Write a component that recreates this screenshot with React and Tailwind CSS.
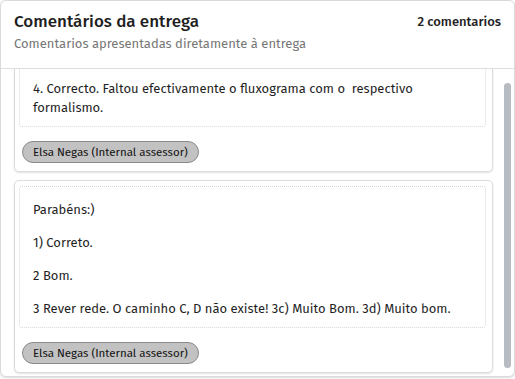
import React, { useRef, useEffect } from 'react';

const comments = [
  {
    id: 1,
    paragraphs: ['4. Correcto. Faltou efectivamente o fluxograma com o\u00a0 respectivo formalismo.'],
    author: 'Elsa Negas (Internal assessor)',
  },
  {
    id: 2,
    paragraphs: [
      'Parabéns:)',
      '1) Correto.',
      '2 Bom.',
      '3 Rever rede. O caminho C, D não existe! 3c) Muito Bom. 3d) Muito bom.',
    ],
    author: 'Elsa Negas (Internal assessor)',
  },
];

const CommentCard = ({ comment }) => (
  <div className="bg-white border border-[#dcdcdc] rounded-[5px] shadow-[0_1px_2px_rgba(0,0,0,0.12)] pt-[5px] pb-[8px] pl-[4px] pr-[6px]">
    <div className="border border-dotted border-[#d8d8d8] rounded-[3px] px-[13px] pt-[13px] pb-[9px] flex flex-col gap-[14px]">
      {comment.paragraphs.map((p, i) => (
        <p key={i} className="text-[13px] leading-[19px] text-[#1f1f1f]">{p}</p>
      ))}
    </div>
    <div className="mt-[12px] pl-[3px]">
      <span className="inline-block bg-[#c2c2c2] border border-[#8a8a8a] rounded-full px-[10px] h-[22px] leading-[20px] text-[11.5px] text-[#111]">
        {comment.author}
      </span>
    </div>
  </div>
);

const App = () => {
  const scrollRef = useRef(null);

  useEffect(() => {
    if (scrollRef.current) scrollRef.current.scrollTop = 10;
  }, []);

  return (
    <div className="h-[379px] w-[515px] bg-white" style={{ fontFamily: '"Fira Sans", Lato, "Open Sans", sans-serif' }}>
      <div className="h-[377px] bg-white border border-[#dadada] rounded-[6px] shadow-[0_1px_3px_rgba(0,0,0,0.15)] flex flex-col overflow-hidden">
        <div className="flex justify-between items-start pl-[13px] pr-[13px] pt-[10px] h-[68px] border-b border-[#dedede] shrink-0">
          <div>
            <h1 className="text-[17px] leading-[22px] text-[#1f1f1f] font-medium">Comentários da entrega</h1>
            <p className="text-[13px] leading-[18px] text-[#767676] mt-[2px]">Comentarios apresentadas diretamente à entrega</p>
          </div>
          <span className="text-[13px] leading-[20px] text-[#222] font-medium mt-[1px]">2 comentarios</span>
        </div>
        <div className="flex flex-1 min-h-0">
          <div ref={scrollRef} className="flex-1 overflow-y-auto [scrollbar-width:none] pl-[13px] pr-[11px]">
            <div className="flex flex-col gap-[8px] pb-[6px]">
              {comments.map((c) => (
                <CommentCard key={c.id} comment={c} />
              ))}
            </div>
          </div>
          <div className="w-[10px] shrink-0 pt-[14px] pb-[8px] pr-[2px]">
            <div className="h-full w-[7px] rounded-full bg-[#b6bcc2]" />
          </div>
        </div>
      </div>
    </div>
  );
};

export default App;
